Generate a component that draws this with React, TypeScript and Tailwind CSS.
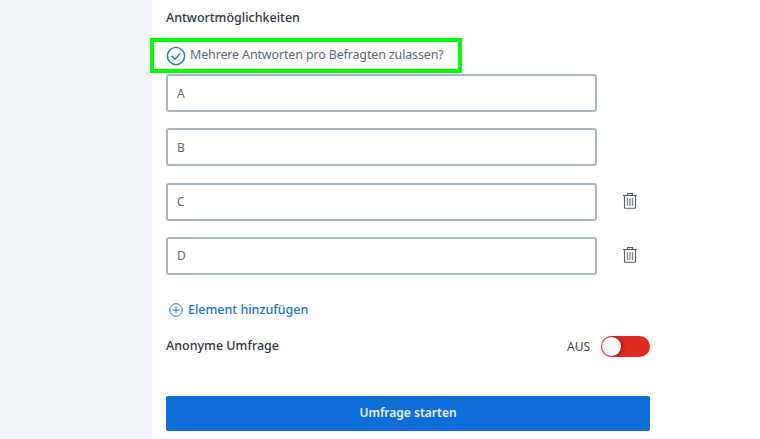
export default function App() {
  const rows = [
    { l: "A", del: false },
    { l: "B", del: false },
    { l: "C", del: true },
    { l: "D", del: true },
  ];
  const Trash = () => (
    <svg width="16" height="17" viewBox="0 0 16 17" fill="none" stroke="#4f5d6e" strokeWidth="1.1">
      <path d="M1 3.5h14" />
      <path d="M5.5 3.5V1.5h5v2" />
      <path d="M2.5 3.5v12a.8.8 0 0 0 .8.8h9.4a.8.8 0 0 0 .8-.8v-12" />
      <path d="M5.5 6v8M8 6v8M10.5 6v8" strokeWidth="1.3" stroke="#7c8794" />
    </svg>
  );
  return (
    <div
      className="flex w-[760px] h-[439px] overflow-hidden bg-white text-[#2f3a48]"
      style={{ fontFamily: '"Noto Sans", sans-serif' }}
    >
      <div className="w-[152px] shrink-0 bg-gradient-to-b from-[#f2f5f9] to-[#f0f3f7]" />
      <div className="w-[484px] ml-[14px] flex flex-col">
        <div className="h-[36px] pt-[9px] text-[12.5px] leading-[18px] font-medium text-[#2d3745]">Antwortmöglichkeiten</div>
        <div className="h-[35px] w-[312px] mt-[2px] -ml-[16px] border-[4px] border-[#00ff00] flex items-center pl-[12px] gap-[4px] shrink-0">
          <svg width="20" height="20" viewBox="0 0 20 20" fill="none" stroke="#12808f" strokeWidth="1.4">
            <circle cx="10" cy="10" r="8.6" />
            <path d="M6 10.3l3 2.9 5-5.6" strokeLinecap="round" strokeLinejoin="round" />
          </svg>
          <span className="text-[12.5px] tracking-[-0.15px] text-[#5b6776] whitespace-nowrap">Mehrere Antworten pro Befragten zulassen?</span>
        </div>
        <div className="flex flex-col gap-[16.33px] mt-[1px]">
          {rows.map((r) => (
            <div key={r.l} className="flex items-center h-[38px]">
              <div className="w-[431px] h-full border-2 border-[#a9b5c0] rounded-[3px] flex items-center pl-[9px] pt-[1px] text-[12px] text-[#5b6776]">
                {r.l}
              </div>
              {r.del && (
                <div className="ml-[25px] -mt-[3px]">
                  <Trash />
                </div>
              )}
            </div>
          ))}
        </div>
        <div className="flex items-center gap-[5px] mt-[25px] ml-[3px] h-[20px]">
          <svg width="14" height="14" viewBox="0 0 14 14" fill="none" stroke="#1a73d4" strokeWidth="1">
            <circle cx="7" cy="7" r="6.3" />
            <path d="M7 3.5v7M3.5 7h7" />
          </svg>
          <span className="text-[12.5px] font-medium text-[#1a73d4]">Element hinzufügen</span>
        </div>
        <div className="flex items-center justify-between mt-[15px] h-[24px]">
          <span className="text-[12.5px] font-medium text-[#2d3745] -mt-[2px]">Anonyme Umfrage</span>
          <div className="flex items-center gap-[11px]">
            <span className="text-[12px] text-[#3b4450]">AUS</span>
            <div className="w-[49px] h-[21px] rounded-full bg-[#e02a22] flex items-center pl-[1px]">
              <div className="w-[19px] h-[19px] rounded-full bg-[#f8f8f8] shadow-[2px_0_4px_rgba(0,0,0,0.3)]" />
            </div>
          </div>
        </div>
        <div className="mt-[37px] h-[35px] rounded-[2px] bg-[#0f6fd9] flex items-center justify-center text-[12px] font-semibold text-white/90">
          Umfrage starten
        </div>
      </div>
    </div>
  );
}
